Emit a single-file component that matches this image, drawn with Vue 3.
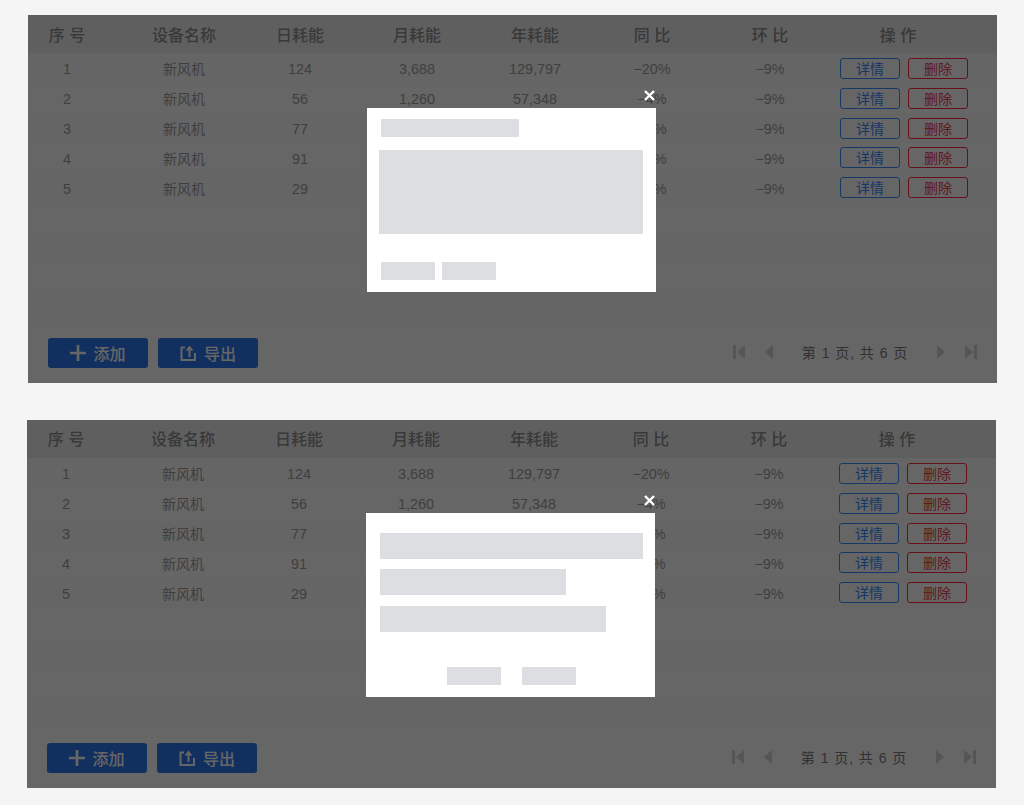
<script setup>
// 设备能耗表格，两张卡片只有弹窗内容不同
const headers = ['序 号', '设备名称', '日耗能', '月耗能', '年耗能', '同 比', '环 比', '操 作'];

const rows = [
  { id: 1, name: '新风机', day: '124', month: '3,688', year: '129,797', yoy: '−20%', mom: '−9%' },
  { id: 2, name: '新风机', day: '56', month: '1,260', year: '57,348', yoy: '−4%', mom: '−9%' },
  { id: 3, name: '新风机', day: '77', month: '2,310', year: '81,200', yoy: '−4%', mom: '−9%' },
  { id: 4, name: '新风机', day: '91', month: '2,730', year: '96,400', yoy: '−4%', mom: '−9%' },
  { id: 5, name: '新风机', day: '29', month: '870', year: '30,600', yoy: '−4%', mom: '−9%' },
];

const emptyRows = [1, 2, 3, 4];
const cards = ['form', 'list'];
</script>

<template>
  <div class="page">
    <section v-for="card in cards" :key="card" class="card" :class="'card-' + card">
      <div class="row head">
        <div v-for="h in headers" :key="h" class="cell">{{ h }}</div>
      </div>
      <div v-for="(row, i) in rows" :key="row.id" class="row">
        <div class="cell num">{{ row.id }}</div>
        <div class="cell">{{ row.name }}</div>
        <div class="cell num">{{ row.day }}</div>
        <div class="cell num">{{ row.month }}</div>
        <div class="cell num">{{ row.year }}</div>
        <div class="cell num">{{ row.yoy }}</div>
        <div class="cell num">{{ row.mom }}</div>
        <div class="cell actions" :class="{ lift: i >= 3 }">
          <button class="link blue">详情</button>
          <button class="link red">删除</button>
        </div>
      </div>
      <div v-for="n in emptyRows" :key="n" class="row"></div>

      <div class="footer">
        <div class="tools">
          <button class="solid">
            <svg width="16" height="16" viewBox="0 0 16 16"><path d="M8 0v16M0 8h16" stroke="#fff" stroke-width="2.7" fill="none" /></svg>
            添加
          </button>
          <button class="solid">
            <svg width="17" height="16" viewBox="0 0 17 16" fill="none" stroke="#fff" stroke-width="2">
              <path d="M5 2.5H1.5v12.5h13.5V8" />
              <path d="M9.5 12V5" />
              <path d="M9.5 0.5L13.5 5.5H5.5z" fill="#fff" stroke="none" />
            </svg>
            导出
          </button>
        </div>
        <div class="pager">
          <svg class="pg" width="12" height="14" viewBox="0 0 12 14"><path d="M0 0h3v14H0zM12 0v14L4 7z" /></svg>
          <svg class="pg second" width="8" height="14" viewBox="0 0 8 14"><path d="M8 0v14L0 7z" /></svg>
          <span class="pg-text">第 1 页, 共 6 页</span>
          <svg class="pg" width="8" height="14" viewBox="0 0 8 14"><path d="M0 0v14l8-7z" /></svg>
          <svg class="pg last" width="12" height="14" viewBox="0 0 12 14"><path d="M12 0H9v14h3zM0 0v14l8-7z" /></svg>
        </div>
      </div>

      <!-- 遮罩和弹窗 -->
      <div class="mask"></div>
      <div class="modal">
        <span class="close">
          <svg width="11" height="11" viewBox="0 0 11 11"><path d="M1 1l9 9M10 1l-9 9" stroke="#fff" stroke-width="2.4" fill="none" /></svg>
        </span>
        <template v-if="card === 'form'">
          <div class="ph title"></div>
          <div class="ph block"></div>
          <div class="btns">
            <div class="ph btn"></div>
            <div class="ph btn"></div>
          </div>
        </template>
        <template v-else>
          <div class="ph line w263"></div>
          <div class="ph line w186"></div>
          <div class="ph line w226"></div>
          <div class="btns center">
            <div class="ph btn"></div>
            <div class="ph btn"></div>
          </div>
        </template>
      </div>
    </section>
  </div>
</template>

<style scoped>
.page {
  width: 1024px;
  height: 805px;
  background: #f5f5f5;
  padding-top: 15px;
  box-sizing: border-box;
  font-family: "Liberation Sans", "Noto Sans CJK SC", sans-serif;
  overflow: hidden;
}
.card {
  position: relative;
  width: 969px;
  height: 368px;
  margin-left: 28px;
  background: #fff;
  overflow: visible;
}
.card-list {
  margin-left: 27px;
  margin-top: 37px;
}
.row {
  display: grid;
  grid-template-columns: 97px 118px 114px 120px 116px 118px 118px 1fr;
  height: 30px;
  align-items: center;
  font-size: 14px;
  color: #9e9e9e;
  background: #fff;
  text-align: center;
}
.row:nth-child(even) {
  background: #fdfdfd;
}
.row.head {
  height: 38px;
  box-sizing: border-box;
  background: #eeeeee;
  font-size: 16px;
  font-weight: 500;
  color: #8f8f8f;
}
.card-list .row.head {
  padding-bottom: 2px;
}
.num {
  font-size: 14.4px;
  padding-top: 2px;
}
.cell:first-child {
  padding-right: 19px;
}
.cell:last-child {
  padding-right: 30px;
}
.actions {
  display: flex;
  justify-content: flex-end;
  gap: 8px;
  padding-right: 29px !important;
}
.actions.lift {
  margin-bottom: 2px;
}
.link {
  width: 60px;
  height: 21px;
  padding: 2px 0 0;
  box-sizing: border-box;
  background: #fff;
  border-radius: 3px;
  font: inherit;
  font-size: 14px;
  line-height: 17px;
}
.blue {
  border: 1px solid #3a8cff;
  color: #3a8cff;
}
.red {
  border: 1px solid #ff2a3c;
  color: #f0404f;
}
.footer {
  display: flex;
  justify-content: space-between;
  align-items: center;
  height: 60px;
  padding: 0 20px;
}
.tools {
  display: flex;
  gap: 10px;
}
.solid {
  display: flex;
  align-items: center;
  justify-content: center;
  gap: 7px;
  width: 100px;
  height: 30px;
  padding: 0;
  border: 0;
  border-radius: 3px;
  background: #2f78ed;
  color: #fff;
  font: inherit;
  font-size: 16px;
  font-weight: 500;
}
.pager {
  display: flex;
  align-items: center;
  margin-bottom: 2px;
}
.pg {
  fill: #d4d4d4;
}
.second {
  margin-left: 20px;
}
.last {
  margin-left: 20px;
}
.pg-text {
  width: 164px;
  text-align: center;
  font-size: 14px;
  letter-spacing: 0.95px;
  color: #7c7c7c;
}
.mask {
  position: absolute;
  inset: 0;
  background: rgba(0, 0, 0, 0.6);
}
.modal {
  position: absolute;
  left: 339px;
  top: 93px;
  width: 289px;
  height: 184px;
  box-sizing: border-box;
  background: #fff;
  display: flex;
  flex-direction: column;
}
.close {
  position: absolute;
  right: 1px;
  top: -18px;
  display: flex;
}
.card-list .close {
  right: 0;
}
.ph {
  background: #dddee2;
}
.card-form .modal {
  padding: 11px 13px 12px 12px;
}
.title {
  width: 138px;
  height: 18px;
  margin-left: 2px;
}
.block {
  height: 84px;
  margin-top: 13px;
}
.btns {
  display: flex;
  gap: 7px;
  margin-top: auto;
  margin-left: 2px;
}
.btn {
  width: 54px;
  height: 18px;
}
.card-list .modal {
  padding: 20px 12px 12px 14px;
}
.line {
  height: 26px;
  margin-bottom: 10px;
}
.w263 { width: 263px; }
.w186 { width: 186px; margin-bottom: 11px; }
.w226 { width: 226px; }
.btns.center {
  gap: 21px;
  margin-left: 67px;
}
</style>

<style>
html, body {
  background: #f5f5f5;
}
</style>
